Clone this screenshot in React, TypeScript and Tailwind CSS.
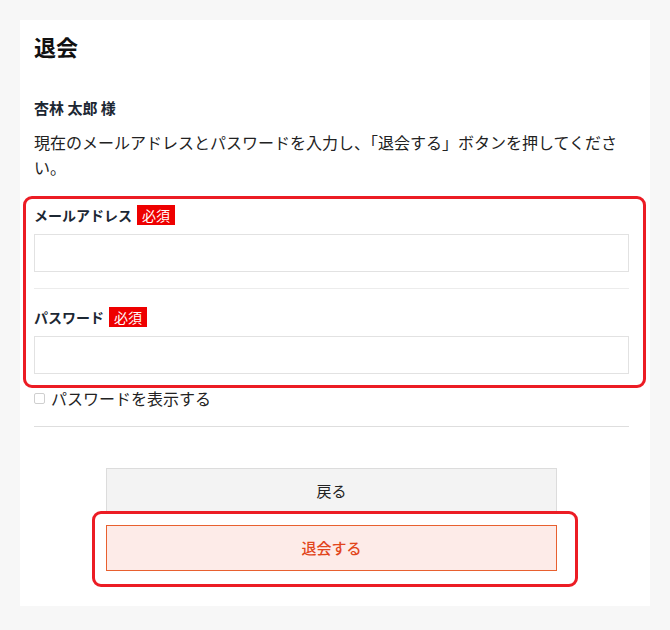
import { FC } from 'react';

const font = { fontFamily: '"Noto Sans CJK JP", "Noto Sans", sans-serif' };

// hand-drawn red annotation frame that sits over the content
const Mark: FC<{ className: string }> = ({ className }) => (
    <div className={`pointer-events-none absolute rounded-[9px] border-[3px] border-[#ec1c24] ${className}`} />
);

const Required = () => (
    <span className="inline-flex h-[20px] items-center bg-[#ee0000] px-[5px] text-[14px] leading-none text-white">必須</span>
);

const Field: FC<{ label: string; type: string }> = ({ label, type }) => (
    <div>
        <div className="flex h-[20px] items-center gap-[5px]">
            <span className="text-[14px] font-bold text-[#1c2733]">{label}</span>
            <Required />
        </div>
        <input type={type} className="mt-[9px] block h-[38px] w-full border border-[#e2e2e2] bg-white px-2 outline-none" />
    </div>
);

export default function App() {
    return (
        <div className="min-h-[630px] bg-[#f7f7f7] px-5 pb-[23px] pt-5" style={font}>
            <div className="bg-white pb-[35px] pl-[14px] pr-[21px] pt-[11px]">
                <h1 className="text-[22px] font-bold leading-[30px] text-[#111]">退会</h1>

                <p className="mt-[35px] text-[15px] font-bold leading-[24px] text-[#1c2733]">杏林 太郎 様</p>
                <p className="mt-[10px] text-[16px] leading-[25px] text-[#222]">
                    現在のメールアドレスとパスワードを入力し、「退会する」ボタンを押してください。
                </p>

                {/* email + password */}
                <div className="relative mt-[25px]">
                    <Field label="メールアドレス" type="email" />
                    <div className="mt-[16px] h-px bg-[#ececec]" />
                    <div className="mt-[18px]">
                        <Field label="パスワード" type="password" />
                    </div>
                    <Mark className="-bottom-[14px] -left-[11px] -right-[17px] -top-[9px]" />
                </div>

                <label className="mt-[12px] flex h-[24px] items-center gap-[6px] text-[16px] text-[#222]">
                    <input type="checkbox" className="h-[11px] w-[11px] appearance-none rounded-[2px] border border-[#cfcfcf] bg-white" />
                    パスワードを表示する
                </label>

                <div className="mt-[16px] h-px bg-[#dedede]" />

                <div className="mx-auto mt-[41px] flex w-[451px] flex-col gap-[11px]">
                    <button type="button" className="h-[46px] border border-[#dcdcdc] bg-[#f3f3f3] text-[15px] text-[#222]">
                        戻る
                    </button>
                    <div className="relative">
                        <button type="button" className="block h-[46px] w-full border border-[#e8602f] bg-[#fdebe8] text-[15px] font-medium text-[#e2461c]">
                            退会する
                        </button>
                        <Mark className="-bottom-[16px] -left-[14px] -right-[21px] -top-[14px]" />
                    </div>
                </div>
            </div>
        </div>
    );
}
